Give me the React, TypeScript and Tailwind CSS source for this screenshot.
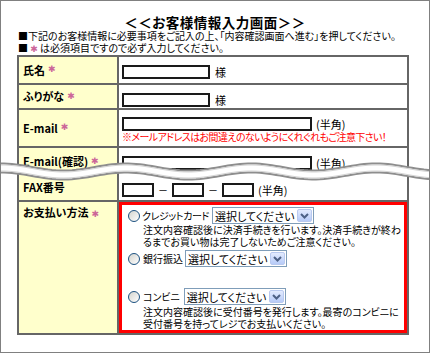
import React from 'react';

const Star = () => (
  <span className="ml-[3px] text-[#cc6699] text-[9px] font-['DejaVu_Sans',sans-serif] font-normal">✱</span>
);

const TextBox = ({ w }: { w: string }) => <div className={`${w} h-[14px] border-2 border-[#1a1a1a] bg-white shrink-0`} />;

const Radio = () => (
  <div className="w-[12px] h-[12px] rounded-full border border-[#1c5180] bg-gradient-to-br from-[#d4d4ce] to-white shrink-0" />
);

const Select = () => (
  <div className="w-[102px] h-[17px] border border-[#7f9db9] bg-white flex items-center justify-between pl-[2px] pr-[1px] shrink-0">
    <span className="text-[11px] leading-[14px] whitespace-nowrap">選択してください</span>
    <div className="w-[15px] h-[13px] rounded-[2px] border border-[#b9c9ef] bg-gradient-to-b from-[#e3ebfe] to-[#b7cbf8] flex items-center justify-center shrink-0">
      <svg width="9" height="6" viewBox="0 0 9 6">
        <path d="M1 1 L4.5 4.5 L8 1" stroke="#4d6185" strokeWidth="2" fill="none" />
      </svg>
    </div>
  </div>
);

function Wave() {
  const top: string[] = [];
  const bottom: string[] = [];
  for (let x = -5; x <= 440; x += 4) {
    const y = 8 - 3.5 * Math.cos((2 * Math.PI * x) / 125);
    top.push(`${x},${y.toFixed(2)}`);
    bottom.push(`${x},${(y + 9).toFixed(2)}`);
  }
  const band = [...top, ...bottom.slice().reverse()].join(' ');
  return (
    <svg className="absolute left-0 top-[158px]" width="430" height="26" viewBox="0 0 430 26">
      <polygon points={band} fill="#fff" />
      <polyline points={top.join(' ')} fill="none" stroke="#8e8e8e" strokeWidth="2" />
      <polyline points={bottom.join(' ')} fill="none" stroke="#8e8e8e" strokeWidth="2" />
      <polyline points={top.join(' ')} fill="none" stroke="#d4d4d4" strokeWidth="1" transform="translate(0 1.5)" />
      <polyline points={bottom.join(' ')} fill="none" stroke="#d4d4d4" strokeWidth="1" transform="translate(0 -1.5)" />
    </svg>
  );
}

export default function App() {
  return (
    <div className="w-[430px] h-[353px] relative overflow-hidden bg-white border border-[#808080] text-black text-[11px] font-['Noto_Sans_CJK_JP',sans-serif] [font-feature-settings:'palt']">
      <h1 className="mt-[14px] text-center font-bold text-[13.5px] leading-[14px] tracking-[0.5px]">＜＜お客様情報入力画面＞＞</h1>
      <p className="ml-[17px] leading-[13px] text-[10px] whitespace-nowrap">■下記のお客様情報に必要事項をご記入の上、「内容確認画面へ進む」を押してください。</p>
      <p className="ml-[17px] leading-[12px] text-[10px] whitespace-nowrap">
        ■ <span className="text-[#cc6699] text-[9px] font-['DejaVu_Sans',sans-serif]">✱</span> は必須項目ですので必ず入力してください。
      </p>

      <div className="ml-[16px] w-[392px] border-2 border-[#666]">
        {/* 氏名 */}
        <div className="flex h-[26px]">
          <div className="w-[100px] shrink-0 bg-[#ffffcc] border-r-2 border-[#666] flex items-center pl-[4px] font-bold">氏名<Star /></div>
          <div className="flex-1 flex items-start pt-[8px] pl-[3px]">
            <TextBox w="w-[88px]" />
            <span className="ml-[5px] leading-[14px]">様</span>
          </div>
        </div>
        {/* ふりがな */}
        <div className="flex h-[25px] border-t-2 border-[#666]">
          <div className="w-[100px] shrink-0 bg-[#ffffcc] border-r-2 border-[#666] flex items-center pl-[4px] font-bold">ふりがな<Star /></div>
          <div className="flex-1 flex items-start pt-[8px] pl-[3px]">
            <TextBox w="w-[88px]" />
            <span className="ml-[5px] leading-[14px]">様</span>
          </div>
        </div>
        {/* E-mail */}
        <div className="flex h-[38px] border-t-2 border-[#666]">
          <div className="w-[100px] shrink-0 bg-[#ffffcc] border-r-2 border-[#666] flex items-center pl-[4px] font-bold">E-mail<Star /></div>
          <div className="flex-1 pt-[7px] pl-[3px]">
            <div className="flex items-center">
              <TextBox w="w-[190px]" />
              <span className="ml-[4px] leading-[14px]">(半角)</span>
            </div>
            <p className="text-[#ff0000] text-[10px] tracking-[-0.6px] leading-[12px] whitespace-nowrap">※メールアドレスはお間違えのないようにくれぐれもご注意下さい！</p>
          </div>
        </div>
        {/* E-mail(確認) */}
        <div className="flex h-[28px] border-t-2 border-[#666]">
          <div className="w-[100px] shrink-0 bg-[#ffffcc] border-r-2 border-[#666] flex items-start pt-[7px] pl-[4px] font-bold leading-[12px]">E-mail(確認)<Star /></div>
          <div className="flex-1 flex items-start pt-[8px] pl-[3px]">
            <TextBox w="w-[190px]" />
            <span className="ml-[4px] leading-[14px]">(半角)</span>
          </div>
        </div>
        {/* FAX番号 */}
        <div className="flex h-[26px]">
          <div className="w-[100px] shrink-0 bg-[#ffffcc] border-r-2 border-[#666] flex items-start pt-[7px] pl-[4px] font-bold leading-[12px]">FAX番号</div>
          <div className="flex-1 flex items-start pt-[9px] pl-[3px]">
            <TextBox w="w-[32px]" />
            <span className="mx-[4px] text-[10px] leading-[14px]">－</span>
            <TextBox w="w-[32px]" />
            <span className="mx-[4px] text-[10px] leading-[14px]">－</span>
            <TextBox w="w-[32px]" />
            <span className="ml-[4px] leading-[14px]">(半角)</span>
          </div>
        </div>
        {/* お支払い方法 */}
        <div className="flex h-[133px] border-t-2 border-[#666]">
          <div className="w-[100px] shrink-0 bg-[#ffffcc] border-r-2 border-[#666] pt-[4px] pl-[4px] font-bold leading-[12px]">お支払い方法<Star /></div>
          <div className="flex-1 border-[3px] border-[#ff0000] pl-[6px] pt-[2px] text-[10px]">
            <div className="flex items-center h-[17px]">
              <Radio />
              <span className="ml-[2px] mr-[3px] tracking-[-0.4px] whitespace-nowrap">クレジットカード</span>
              <Select />
            </div>
            <div className="pl-[15px] leading-[12px] whitespace-nowrap">
              <p>注文内容確認後に決済手続きを行います。決済手続きが終わ</p>
              <p>るまでお買い物は完了しないためご注意ください。</p>
            </div>
            <div className="flex items-center h-[17px] mt-[2px]">
              <Radio />
              <span className="ml-[3px] mr-[2px] whitespace-nowrap">銀行振込</span>
              <Select />
            </div>
            <div className="flex items-center h-[17px] mt-[21px]">
              <Radio />
              <span className="ml-[3px] mr-[4px] whitespace-nowrap">コンビニ</span>
              <Select />
            </div>
            <div className="pl-[15px] mt-[1px] leading-[12px] whitespace-nowrap">
              <p>注文内容確認後に受付番号を発行します。最寄のコンビニに</p>
              <p>受付番号を持ってレジでお支払いください。</p>
            </div>
          </div>
        </div>
      </div>

      <Wave />
    </div>
  );
}
